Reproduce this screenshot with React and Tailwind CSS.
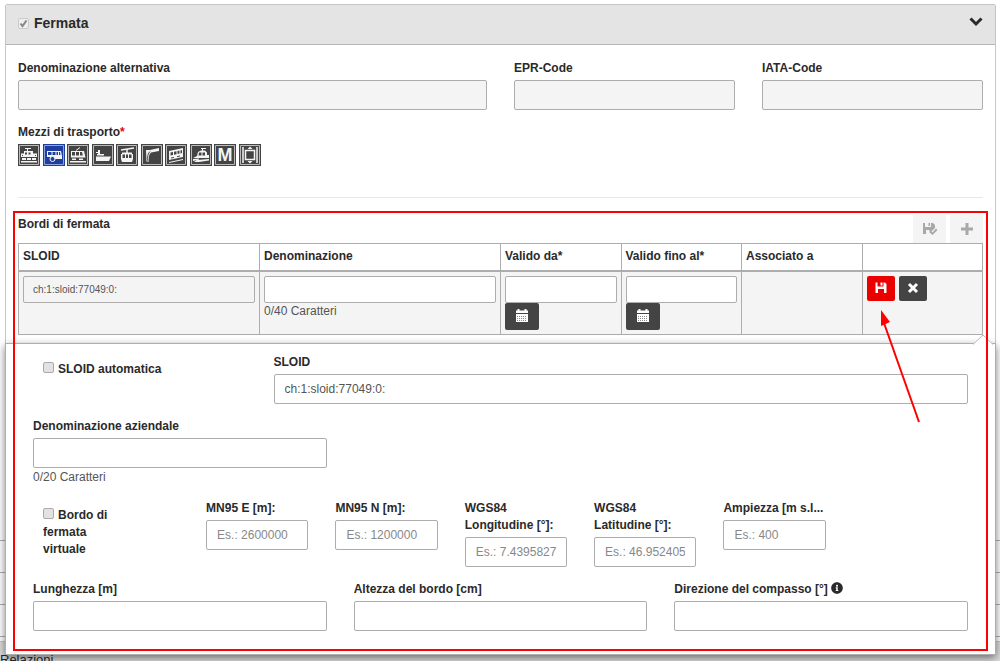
import React, { useState } from 'react';
import { FaInfoCircle } from 'react-icons/fa';

const TRANSPORTS = [
  {
    name: 'Treno',
    icon: (
      <>
        <path className="fill-none" d="M7 4.500h6M9.500 5v2" />
        <path className="stroke-none" d="M3 13V9.500h3V7h9v2.500h4V13z" />
        <path className="fill-[#444] stroke-none" d="M7 8.500h2v2H7zM10.500 8.500h2v2h-2zM4 11h1v1H4zM17 11h1v1h-1z" />
        <path className="stroke-none" d="M4 14h4v2H4zM9 14h4v2H9zM14 14h4v2h-4zM3 17h16v1.500H3z" />
      </>
    ),
  },
  {
    name: 'Autobus',
    icon: (
      <>
        <path className="stroke-none" d="M4 7h14l1 5v3H11V13H4z" />
        <path className="fill-[#1e3fa0] stroke-none" d="M5 8h3.500v3H5zM9.500 8h3v3h-3zM13.500 8H15v3h-1.500zM16 8h1l.5 3H16z" />
        <circle cx="9.500" cy="15" r="2.500" className="fill-[#1e3fa0]" />
      </>
    ),
  },
  {
    name: 'Tram',
    icon: (
      <>
        <path className="fill-none" d="M9 6.500l4-3" />
        <path className="stroke-none" d="M4 7h13l1.500 6.500H4z" />
        <path className="fill-[#444] stroke-none" d="M5 8h3v3.500H5zM9 8h3v3.500H9zM13 8h2l.8 3.500H13z" />
        <path className="stroke-none" d="M5 14.500h4V16H5zM12 14.500h4V16h-4zM3 17h16v1.500H3z" />
      </>
    ),
  },
  {
    name: 'Battello',
    icon: (
      <>
        <path className="stroke-none" d="M4 12.500h15L17 17H4zM5 10h7v1.500H5zM6 6h2v4H6zM4 8h2v1H4z" />
      </>
    ),
  },
  {
    name: 'Funivia',
    icon: (
      <>
        <path className="fill-none" strokeWidth="1.500" d="M5 6l13-2M11 5v4" />
        <path className="stroke-none" d="M6 8.500h10v1.500h1v5l-1 3H6l-1-3v-5h1z" />
        <path className="fill-[#444] stroke-none" d="M6.500 10.500h2.500V14H6.500zM10 10.500h2V14h-2zM13 10.500h2.500V14H13z" />
      </>
    ),
  },
  {
    name: 'Seggiovia',
    icon: (
      <>
        <path className="stroke-none" d="M5 6h4l9-2v3l-8 1.500c-2 1.500-2.500 5-2 9H5.500z" />
        <path className="fill-none stroke-[#444]" d="M7 17c-1-4 0-8 2-9.500" />
      </>
    ),
  },
  {
    name: 'Funicolare',
    icon: (
      <>
        <path className="stroke-none" d="M4 7l14-3v9L4 16z" />
        <path className="fill-[#444] stroke-none" d="M5.500 8.500L8 8v3l-2.500.5zM9 7.800l2.500-.5v3L9 10.800zM12.500 7l2-.4v3l-2 .4zM15.500 6.400l1.500-.3v3l-1.500.3zM6 13.500l3-.6v1l-3 .6zM12 12.200l3-.6v1l-3 .6z" />
        <path className="fill-none" d="M4 18.500l14-3" />
      </>
    ),
  },
  {
    name: 'Cremagliera',
    icon: (
      <>
        <path className="fill-none" d="M11 4.500h5M12.500 5v2" />
        <path className="stroke-none" d="M3 14l4-2 1-4 3-1.500h4l2 2V11h2v3z" />
        <path className="fill-[#444] stroke-none" d="M9 8.500h2.500v3H8.500zM12.500 8.500H15v3h-2.500z" />
        <path className="stroke-none" d="M3 15l6-.5v1L3 17zM7 16l12-1v1.500L9 18H4z" />
      </>
    ),
  },
  {
    name: 'Metropolitana',
    icon: (
      <text x="11" y="17" textAnchor="middle" className="text-[18px] font-bold stroke-none">M</text>
    ),
  },
  {
    name: 'Ascensore',
    icon: (
      <>
        <path className="fill-none" strokeWidth="1.500" d="M6.500 6.500h9v9h-9zM4 3v16M18 3v16" />
        <path className="stroke-none" d="M8.500 5L11 2.500 13.500 5zM8.500 17h5L11 19.500z" />
      </>
    ),
  },
];

const SaveIcon = ({ checked }) => (
  <svg width="16" height="14" viewBox="0 0 16 14" fill="currentColor">
    <path fillRule="evenodd" d={checked
      ? 'M1 1h2v4h6V1h2l2 2v3L9 10 7 8H4v4H1zM6.500 1H8v3H6.500z'
      : 'M2.500 1.500h2v4h6v-4h1.500L13.500 3v9H11V8H5v4H2.500zM7.500 1.500h2v3h-2z'} />
    {checked && <path d="M7 10l1.500-1.500 2 2L14 6.500 15.500 8l-5 5z" />}
  </svg>
);

const CalendarIcon = () => (
  <svg width="14" height="14" viewBox="0 0 14 14" fill="currentColor">
    <path d="M1 1.500h1.500V0h2v1.500h5V0h2v1.500H13V4H1z" />
    <path d="M1 5h12v8H1z" />
    <path className="stroke-[#888]" strokeDasharray="1 1" d="M2 7.500h10M2 9.500h10M2 11.500h10" />
  </svg>
);

const StrokeIcon = ({ d, width = 3 }) => (
  <svg width="14" height="14" viewBox="0 0 14 14" fill="none" stroke="currentColor" strokeWidth={width}>
    <path d={d} />
  </svg>
);

const Field = ({ id, label, icon, className = '', note, ...props }) => (
  <div className={className}>
    <label htmlFor={id} className="block font-bold whitespace-nowrap mb-[3px]">
      {label} {icon}
    </label>
    <input
      id={id}
      type="text"
      className="block w-full h-[30px] px-[10px] bg-white border border-[#adadad] rounded-[2px] text-[#555] placeholder:text-[#888] disabled:bg-[#f4f4f4]"
      {...props}
    />
    {note && <p className="mt-px text-[#555]">{note}</p>}
  </div>
);

const Checkbox = ({ label }) => (
  <label className="block pl-[10px] font-bold">
    <input
      type="checkbox"
      className="appearance-none inline-block w-[11px] h-[11px] mr-1 border border-[#aaa] rounded-[2px] bg-[#e2e2e2] checked:bg-[#1e3fa0]"
    />
    {label}
  </label>
);

const cell = 'border border-[#adadad] px-1 text-left align-top';
const cellInput = 'block w-full h-[27px] px-[9px] text-[10px] border border-[#adadad] rounded-[2px] bg-white text-[#555] disabled:bg-[#f4f4f4]';
const toolButton = 'flex items-center justify-center w-[33px] h-7 bg-[#f4f4f4] text-[#a8a8a8]';

const App = () => {
  const [selected, setSelected] = useState('Autobus');

  return (
    <div className="h-screen overflow-hidden bg-white pt-1 text-xs leading-[17px] text-[#2a2a2a] font-['Liberation_Sans',Arial,sans-serif]">
      <section className="ml-[5px] mr-1 border border-[#c6c6c6] rounded-t-[2px]">
        <header className="flex items-center justify-between h-10 px-3 pb-[3px] bg-[#e4e4e4] border-b border-[#b5b5b5]">
          <label className="flex items-center gap-[5px] text-sm font-bold">
            <span className="relative flex">
              <input type="checkbox" defaultChecked disabled className="appearance-none w-[11px] h-[11px] border border-[#ccc] rounded-[2px] bg-[#eee]" />
              <svg className="absolute inset-0" width="11" height="11" viewBox="0 0 11 11" fill="none" stroke="#858585" strokeWidth="2">
                <path d="M2.500 5.500l2 2.500 4-5.500" />
              </svg>
            </span>
            Fermata
          </label>
          <button type="button" aria-label="Chiudi" className="mb-1">
            <StrokeIcon d="M1.500 4.500l5.500 5.500 5.500-5.500" />
          </button>
        </header>

        <div className="px-3 pt-[15px] pb-36">
          <div className="grid grid-cols-12 gap-x-[27px]">
            <Field id="alt" label="Denominazione alternativa" className="col-span-6" disabled />
            <Field id="epr" label="EPR-Code" className="col-span-3" disabled />
            <Field id="iata" label="IATA-Code" className="col-span-3" disabled />
          </div>

          <p className="mt-[14px] font-bold">
            Mezzi di trasporto<span className="text-red-600">*</span>
          </p>
          <div className="flex justify-between w-[243px] mt-[3px]">
            {TRANSPORTS.map((t) => (
              <button
                key={t.name}
                type="button"
                aria-label={t.name}
                onClick={() => setSelected(t.name)}
                className={selected === t.name ? 'bg-[#1e3fa0]' : 'bg-[#444]'}
              >
                <svg width="22" height="22" viewBox="0 0 22 22" fill="#f4f4f4" stroke="#f4f4f4" strokeWidth="1">
                  <path d="M1.500 1.500h19v19h-19z" fill="none" stroke={selected === t.name ? '#8fa3dc' : '#bbb'} />
                  {t.icon}
                </svg>
              </button>
            ))}
          </div>

          <hr className="mt-[31px] border-[#e8e8e8]" />

          <div className="flex justify-between mt-[17px]">
            <h2 className="font-bold pt-px">Bordi di fermata</h2>
            <div className="flex gap-1">
              <button type="button" aria-label="Salva tutto" disabled className={toolButton}><SaveIcon checked /></button>
              <button type="button" aria-label="Aggiungi" disabled className={toolButton}><StrokeIcon d="M7 1v12M1 7h12" /></button>
            </div>
          </div>

          <div className="relative">
            <table className="w-full table-fixed border-collapse">
              <thead>
                <tr className="h-[27px]">
                  <th className={`${cell} w-1/4 pt-1`}>SLOID</th>
                  <th className={`${cell} w-1/4 pt-1`}>Denominazione</th>
                  <th className={`${cell} pt-1`}>Valido da*</th>
                  <th className={`${cell} pt-1`}>Valido fino al*</th>
                  <th className={`${cell} pt-1`}>Associato a</th>
                  <th className={cell} aria-label="Azioni"></th>
                </tr>
              </thead>
              <tbody>
                <tr className="h-16 bg-[#f4f4f4] border-t-2 border-[#adadad]">
                  <td className={`${cell} pt-1`}>
                    <input type="text" aria-label="SLOID" disabled defaultValue="ch:1:sloid:77049:0:" className={cellInput} />
                  </td>
                  <td className={`${cell} pt-1`}>
                    <input type="text" aria-label="Denominazione" className={cellInput} />
                    <p className="text-[#555]">0/40 Caratteri</p>
                  </td>
                  {['Valido da', 'Valido fino al'].map((name) => (
                    <td key={name} className={`${cell} pt-1`}>
                      <input type="text" aria-label={name} className={cellInput} />
                      <button type="button" aria-label={`Calendario ${name}`} className="flex items-center justify-center w-[34px] h-[27px] rounded-[2px] bg-[#444] text-white">
                        <CalendarIcon />
                      </button>
                    </td>
                  ))}
                  <td className={cell}></td>
                  <td className={`${cell} pt-1`}>
                    <div className="flex gap-1">
                      <button type="button" aria-label="Salva" className="flex items-center justify-center w-7 h-[25px] rounded-[2px] bg-[#eb0000] text-white"><SaveIcon /></button>
                      <button type="button" aria-label="Annulla" className="flex items-center justify-center w-7 h-[25px] rounded-[2px] bg-[#444] text-white"><StrokeIcon d="M3 3l8 8M11 3l-8 8" /></button>
                    </div>
                  </td>
                </tr>
              </tbody>
            </table>

            <div className="absolute -inset-x-[13px] top-full z-10 mt-2 px-[27px] pt-[10px] pb-[23px] bg-white border border-[#adadad] shadow-[0_3px_8px_rgba(0,0,0,0.5)]">
              <svg className="absolute -top-[10px] right-[2px]" width="20" height="11" viewBox="0 0 20 11" fill="#fff" stroke="#bbb">
                <path d="M0 10.500L10 1l10 9.500" />
              </svg>

              <div className="grid grid-cols-12 gap-x-[27px]">
                <div className="col-span-3 pt-[7px]"><Checkbox label="SLOID automatica" /></div>
                <Field id="sloid" label="SLOID" className="col-span-9" defaultValue="ch:1:sloid:77049:0:" />
                <Field id="aziendale" label="Denominazione aziendale" className="col-span-4 mt-[14px]" note="0/20 Caratteri" />
              </div>

              <div className="grid grid-cols-[147fr_103fr_103fr_103fr_103fr_103fr_116fr] gap-x-[27px] mt-[14px]">
                <div className="pt-[7px] pr-12"><Checkbox label="Bordo di fermata virtuale" /></div>
                <Field id="mn95e" label="MN95 E [m]:" placeholder="Es.: 2600000" />
                <Field id="mn95n" label="MN95 N [m]:" placeholder="Es.: 1200000" />
                <Field id="lon" label={<>WGS84<br />Longitudine [°]:</>} placeholder="Es.: 7.4395827" />
                <Field id="lat" label={<>WGS84<br />Latitudine [°]:</>} placeholder="Es.: 46.952405" />
                <Field id="ampiezza" label="Ampiezza [m s.l..." placeholder="Es.: 400" />
              </div>

              <div className="grid grid-cols-3 gap-x-[27px] mt-[14px]">
                <Field id="lunghezza" label="Lunghezza [m]" />
                <Field id="altezza" label="Altezza del bordo [cm]" />
                <Field id="direzione" label="Direzione del compasso [°]" icon={<FaInfoCircle size={12} className="inline align-[-1px]" />} />
              </div>

              <div className="absolute -top-[133px] bottom-[3px] left-[7px] right-[7px] border-2 border-[#fe0000] pointer-events-none">
                <svg className="absolute right-[65px] top-[95px]" width="44" height="116" viewBox="0 0 44 116">
                  <path d="M7 15l35 99" stroke="#fe0000" strokeWidth="2" />
                  <path d="M4 2l9 12-9 4z" fill="#fe0000" />
                </svg>
              </div>
            </div>
          </div>
        </div>
      </section>

      <section className="ml-[5px] mr-1 mt-[5px] h-[41px] border border-[#c6c6c6] bg-[#e4e4e4]"></section>

      <div className="mt-[14px] border-b border-[#adadad]">
        <div className="h-8 border-t border-[#adadad]"></div>
        <div className="h-8 border-t border-[#adadad]"></div>
        <div className="h-8 border-t border-[#adadad]"></div>
      </div>
      <footer className="h-10 mt-1 pt-[9px] text-[13px] bg-[#dcdcdc] border-t border-[#c6c6c6]">Relazioni</footer>
    </div>
  );
};

export default App;
